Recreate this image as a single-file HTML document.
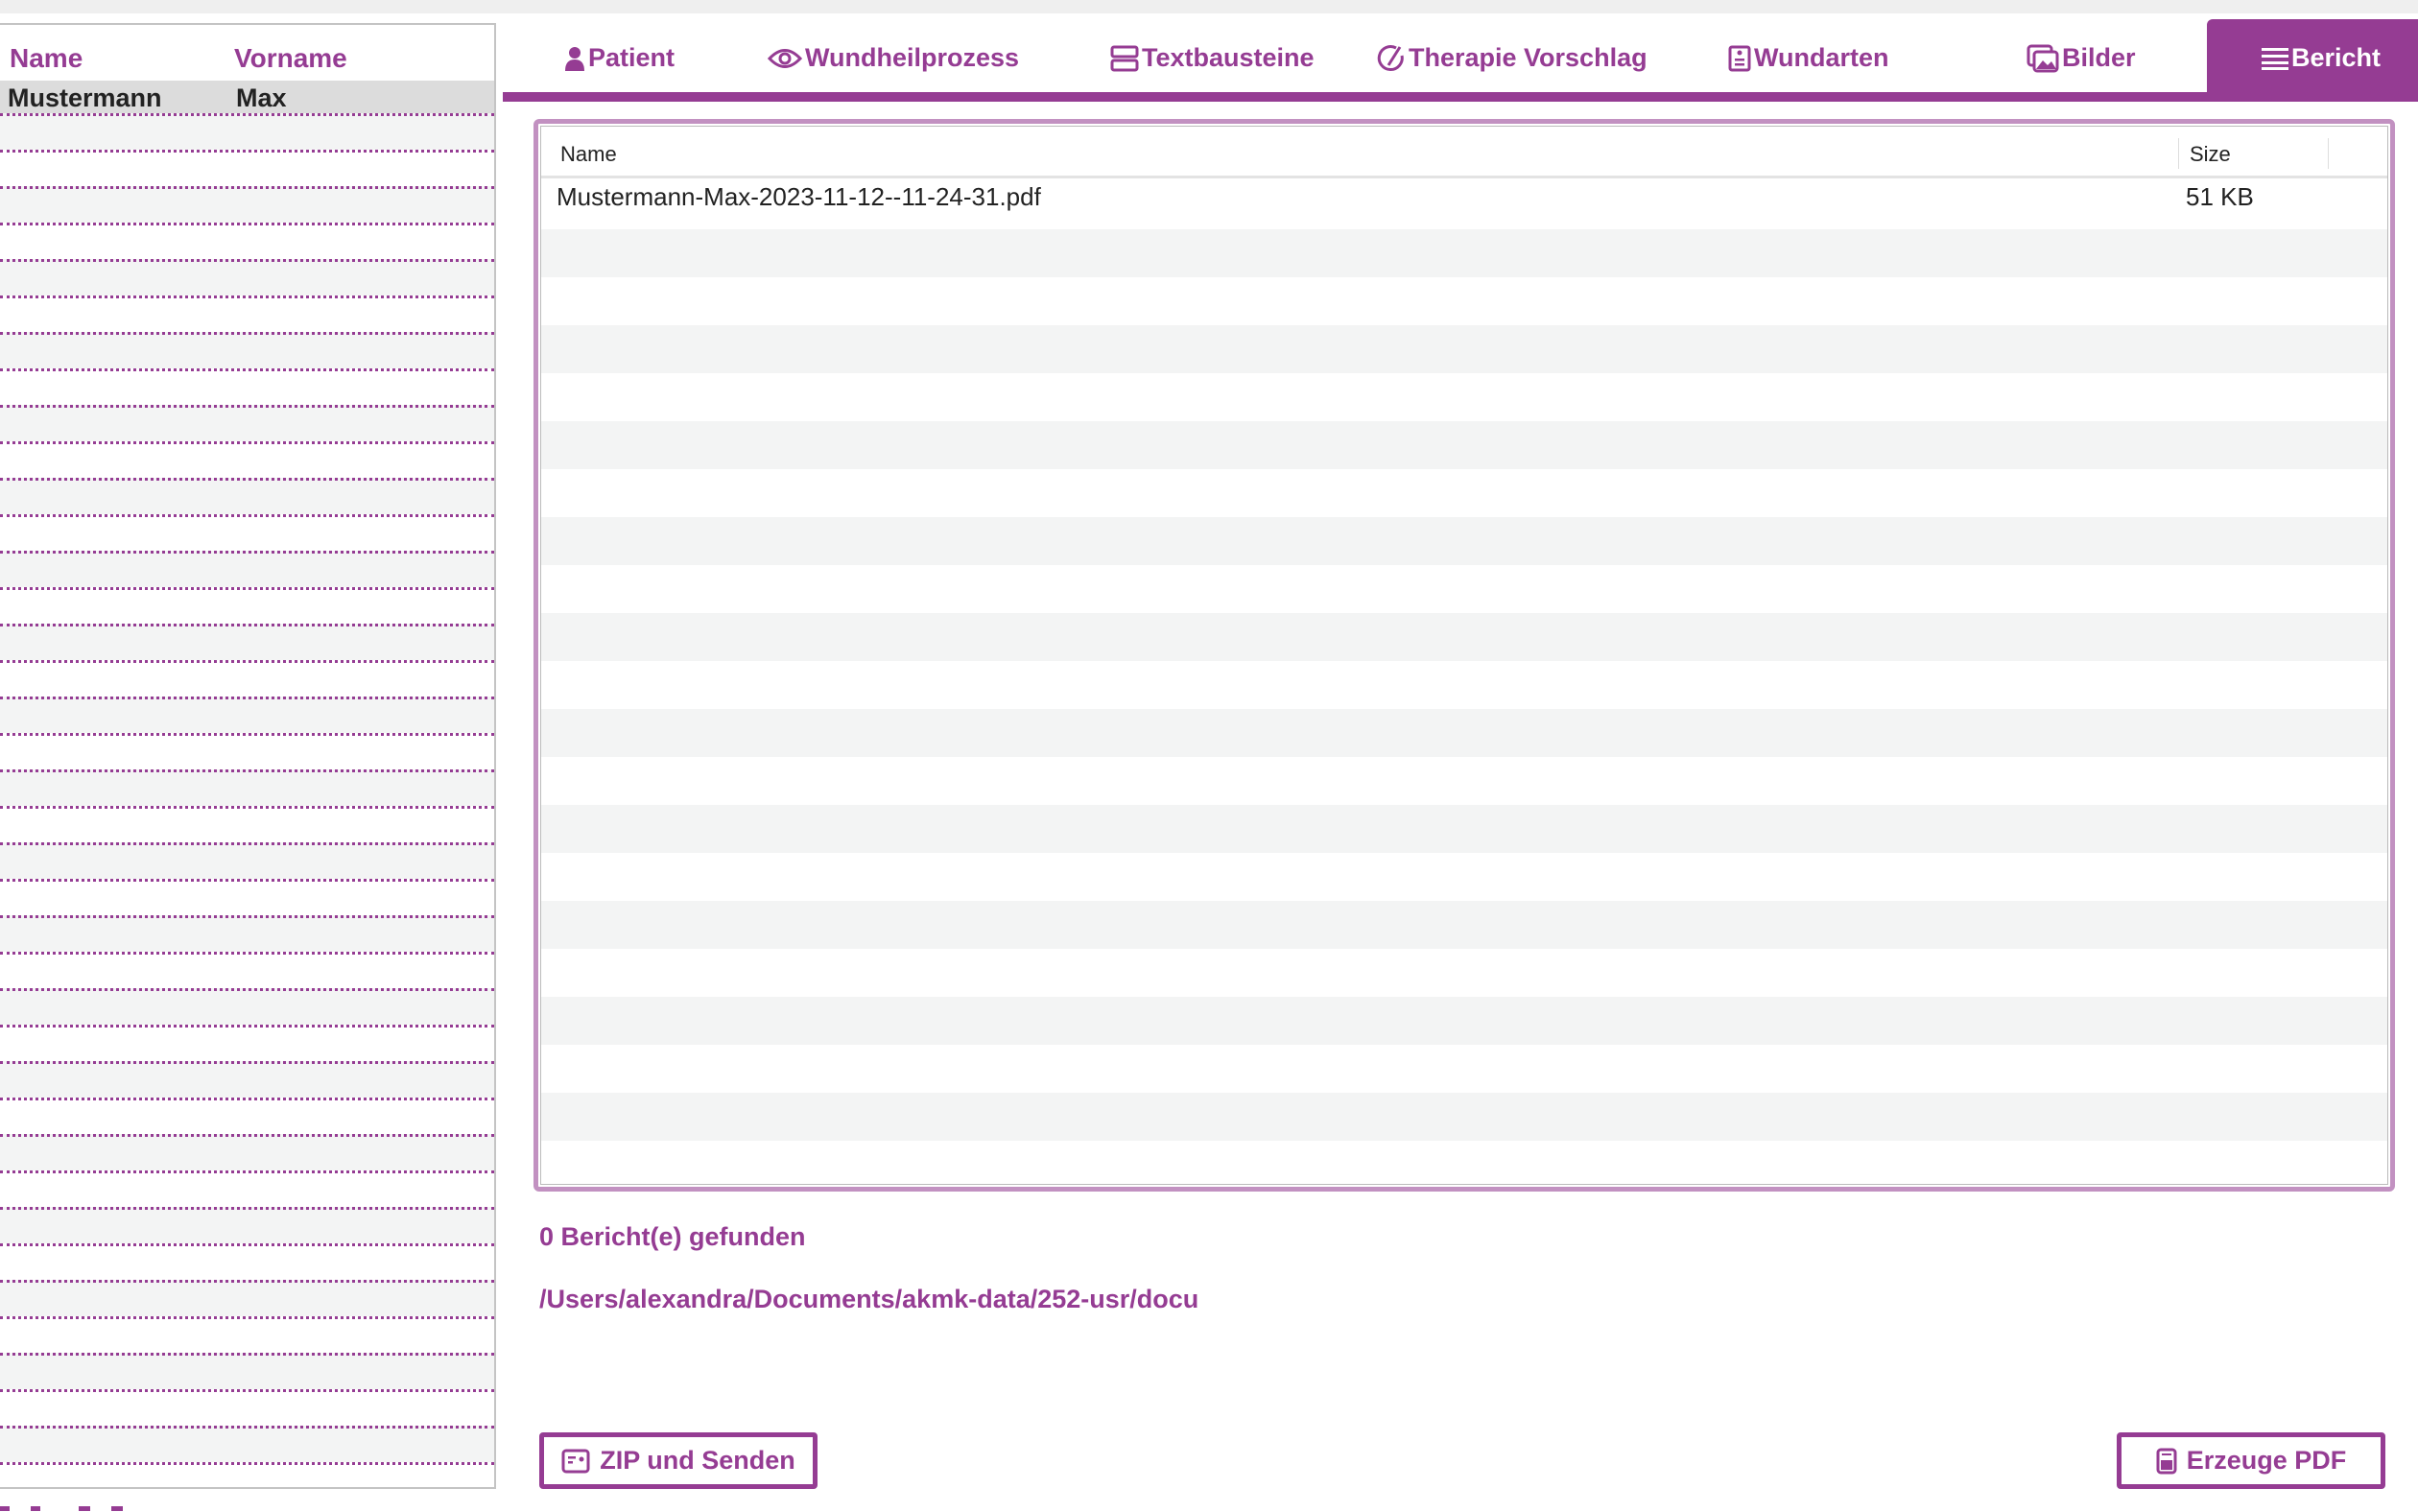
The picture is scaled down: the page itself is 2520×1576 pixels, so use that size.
<!DOCTYPE html>
<html><head><meta charset="utf-8"><style>
*{margin:0;padding:0;box-sizing:border-box}
body{width:2520px;height:1576px;position:relative;background:#fff;font-family:"Liberation Sans",sans-serif;overflow:hidden}
.abs{position:absolute}
.topbar{left:0;top:0;width:2520px;height:14px;background:#efefef}
.left{left:0;top:24px;width:517px;height:1528px;border:2px solid #c4c4c4;border-left:none;background:#fff;overflow:hidden}
.ph{position:absolute;top:19px;font-size:28px;font-weight:bold;color:#953c93}
.sel{position:absolute;left:0;top:58px;width:515px;height:37px;background:#dcdcdc}
.sel span{position:absolute;top:3px;font-size:27px;font-weight:bold;color:#222}
.lrow{position:absolute;left:0;width:515px;height:38px;border-top:3px dotted #953c93}
.tab{position:absolute;top:45px;font-size:27px;font-weight:bold;color:#953c93;display:flex;align-items:center;gap:3px}
.tab svg{display:block}
.tabline{left:524px;top:96px;width:1996px;height:10px;background:#953c93}
.active{left:2300px;top:20px;width:220px;height:80px;background:#953c93;border-top-left-radius:6px}
.tbl{left:556px;top:124px;width:1940px;height:1118px;border:5px solid #c291c1;border-radius:6px;background:#fff}
.inner{position:absolute;left:2px;top:2px;right:2px;bottom:2px;border:1px solid #bbb;overflow:hidden}
.trow{position:absolute;left:0;right:0;height:50px}
.btn{position:absolute;border:5px solid #953c93;border-radius:4px;height:59px;display:flex;align-items:center;justify-content:center;gap:10px;font-size:27px;color:#953c93;font-weight:bold}
.info{font-size:27px;font-weight:bold;color:#953c93}
</style></head><body>
<div class="abs topbar"></div>
<div class="abs left">
  <div class="ph" style="left:10px">Name</div>
  <div class="ph" style="left:244px">Vorname</div>
  <div class="sel"><span style="left:8px">Mustermann</span><span style="left:246px">Max</span></div>
  <div id="lrows"></div>
</div>
<div class="abs" style="left:0;top:1570px;width:10px;height:5px;background:#953c93"></div>
<div class="abs" style="left:32px;top:1570px;width:10px;height:5px;background:#953c93"></div>
<div class="abs" style="left:82px;top:1570px;width:12px;height:5px;background:#953c93"></div>
<div class="abs" style="left:116px;top:1570px;width:12px;height:5px;background:#953c93"></div>

<div class="abs tabline"></div>
<div class="abs active"></div>
<div class="tab" style="left:588px"><svg width="22" height="26" viewBox="0 0 22 26"><circle cx="11" cy="7" r="6" fill="#953c93"/><path d="M1 26 Q1 14 11 14 Q21 14 21 26Z" fill="#953c93"/></svg>Patient</div>
<div class="tab" style="left:800px"><svg width="36" height="26" viewBox="0 0 36 26"><path d="M2 13 Q18 -4 34 13 Q18 30 2 13Z" fill="none" stroke="#953c93" stroke-width="3"/><circle cx="18" cy="13" r="5" fill="none" stroke="#953c93" stroke-width="3"/></svg>Wundheilprozess</div>
<div class="tab" style="left:1157px"><svg width="30" height="28" viewBox="0 0 30 28"><rect x="2" y="2" width="26" height="10" rx="2" fill="none" stroke="#953c93" stroke-width="3"/><rect x="2" y="16" width="26" height="10" rx="2" fill="none" stroke="#953c93" stroke-width="3"/></svg>Textbausteine</div>
<div class="tab" style="left:1435px"><svg width="30" height="30" viewBox="0 0 30 30"><path d="M20 4 A12 12 0 1 0 26 12" fill="none" stroke="#953c93" stroke-width="3"/><path d="M24 3 L12 22" stroke="#953c93" stroke-width="3"/></svg>Therapie Vorschlag</div>
<div class="tab" style="left:1801px"><svg width="24" height="28" viewBox="0 0 24 28"><rect x="2" y="2" width="20" height="24" rx="2" fill="none" stroke="#953c93" stroke-width="3"/><rect x="7" y="14" width="10" height="2.5" fill="#953c93"/><rect x="7" y="19" width="10" height="2.5" fill="#953c93"/><circle cx="12" cy="8" r="2.5" fill="#953c93"/></svg>Wundarten</div>
<div class="tab" style="left:2112px"><svg width="34" height="30" viewBox="0 0 34 30"><rect x="2" y="2" width="24" height="20" rx="3" fill="none" stroke="#953c93" stroke-width="3"/><rect x="8" y="8" width="24" height="20" rx="3" fill="#fff" stroke="#953c93" stroke-width="3"/><path d="M10 26 L17 17 L22 22 L26 18 L31 26Z" fill="#953c93"/></svg>Bilder</div>
<div class="tab" style="left:2357px;color:#fff"><svg width="28" height="24" viewBox="0 0 28 24"><rect x="0" y="1" width="28" height="3" fill="#fff"/><rect x="0" y="8" width="28" height="3" fill="#fff"/><rect x="0" y="15" width="28" height="3" fill="#fff"/><rect x="0" y="21" width="28" height="3" fill="#fff"/></svg>Bericht</div>

<div class="abs tbl"><div class="inner" id="inner">
  <div style="position:absolute;left:0;right:0;top:0;height:54px;border-bottom:3px solid #e3e3e3;background:#fff"></div>
  <div style="position:absolute;left:20px;top:16px;font-size:22px;color:#222">Name</div>
  <div style="position:absolute;left:1706px;top:12px;width:1px;height:32px;background:#ddd"></div>
  <div style="position:absolute;left:1718px;top:16px;font-size:22px;color:#222">Size</div>
  <div style="position:absolute;left:1862px;top:12px;width:1px;height:32px;background:#ddd"></div>
</div></div>

<div class="abs info" style="left:562px;top:1274px">0 Bericht(e) gefunden</div>
<div class="abs info" style="left:562px;top:1339px">/Users/alexandra/Documents/akmk-data/252-usr/docu</div>

<div class="btn" style="left:562px;top:1493px;width:290px"><svg width="30" height="26" viewBox="0 0 30 26"><rect x="2" y="2" width="26" height="22" rx="3" fill="none" stroke="#953c93" stroke-width="3"/><rect x="7" y="8" width="8" height="2.5" fill="#953c93"/><rect x="7" y="13" width="5" height="2.5" fill="#953c93"/><circle cx="21" cy="11" r="2.5" fill="#953c93"/></svg>ZIP und Senden</div>
<div class="btn" style="left:2206px;top:1493px;width:280px"><svg width="22" height="28" viewBox="0 0 22 28"><rect x="2" y="2" width="18" height="24" rx="3" fill="none" stroke="#953c93" stroke-width="3"/><rect x="6" y="6" width="10" height="2" fill="#953c93"/><rect x="5" y="13" width="12" height="10" fill="#953c93"/></svg>Erzeuge PDF</div>

<script>
var l=document.getElementById('lrows'),h='';
for(var i=0;i<38;i++){var y=92+i*38;h+='<div class="lrow" style="top:'+y+'px;background:'+(i%2==0?'#f3f4f4':'#fff')+'"></div>';}
l.innerHTML=h;
var t=document.getElementById('inner'),s='';
s+='<div class="trow" style="top:57px;background:#fff"><span style="position:absolute;left:16px;top:1px;font-size:26px;color:#222">Mustermann-Max-2023-11-12--11-24-31.pdf</span><span style="position:absolute;left:1714px;top:1px;font-size:26px;color:#222">51 KB</span></div>';
for(var j=1;j<22;j++){s+='<div class="trow" style="top:'+(57+j*50)+'px;background:'+(j%2==1?'#f3f4f4':'#fff')+'"></div>';}
t.insertAdjacentHTML('afterbegin',s);
</script>
</body></html>
